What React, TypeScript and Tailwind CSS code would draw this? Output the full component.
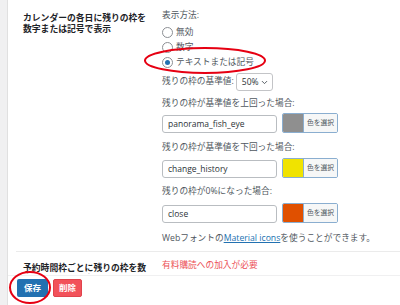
import { ChevronDown } from "lucide-react";

const font = "font-['Open_Sans','Noto_Sans_CJK_JP',sans-serif]";

function Radio({ label, checked }: { label: string; checked?: boolean }) {
    return (
        <div className="flex items-center gap-[3px] h-[15px] leading-[15px]">
            <span className="w-[11px] h-[11px] rounded-full border border-[#8c8f94] bg-white flex items-center justify-center">
                {checked && <span className="w-[5px] h-[5px] rounded-full bg-[#2271b1]" />}
            </span>
            <span>{label}</span>
        </div>
    );
}

function IconRow({ value, color, className }: { value: string; color: string; className?: string }) {
    return (
        <div className={`flex items-start gap-[5px] ${className ?? ""}`}>
            <div className="mt-[2px] w-[115px] h-[18px] border border-[#b9bdc1] rounded-[3px] bg-white pl-[5px] flex items-center text-[8.5px] text-[#2c3338]">
                {value}
            </div>
            <div className="w-[56px] h-[20px] border border-[#8aaed0] rounded-[2px] flex overflow-hidden">
                <span className="w-[20px] h-full" style={{ backgroundColor: color }} />
                <span className="flex-1 bg-[#f6f7f7] border-l border-[#8aaed0] flex items-center justify-center text-[6.8px] text-[#50575e]">
                    色を選択
                </span>
            </div>
        </div>
    );
}

export default function App() {
    return (
        <div className={`relative w-[400px] h-[305px] bg-[#f0f0f1] flex overflow-hidden ${font}`}>
            <div className="w-[7px] shrink-0" />
            <div className="flex-1 bg-white border-l border-[#e0e0e0] flex flex-col">
                <div className="flex-1 overflow-hidden pl-[8px]">
                    {/* row: 残りの枠を表示 */}
                    <div className="grid grid-cols-[146px_1fr] border-b border-[#ebebeb]">
                        <div className="pl-[7px] pr-[11px] pt-[13px] text-[8.8px] leading-[11px] font-bold text-[#1d2327]">
                            カレンダーの各日に残りの枠を<br />数字または記号で表示
                        </div>
                        <div className="pt-[8px] pb-[5px] text-[8.7px] text-[#50575e]">
                            <div className="h-[15px] leading-[15px]">表示方法:</div>
                            <div className="mt-[2px]">
                                <Radio label="無効" />
                                <Radio label="数字" />
                                <Radio label="テキストまたは記号" checked />
                            </div>
                            <div className="mt-[3px] flex items-center gap-[2px] h-[18px]">
                                <span>残りの枠の基準値:</span>
                                <div className="w-[37px] h-[18px] border border-[#c3c4c7] rounded-[3px] flex items-center justify-between pl-[5px] pr-[3px] text-[8.5px] text-[#2c3338]">
                                    <span>50%</span>
                                    <ChevronDown size={9} strokeWidth={2.5} className="text-[#50575e]" />
                                </div>
                            </div>
                            <div className="mt-[5px] h-[15px] leading-[15px]">残りの枠が基準値を上回った場合:</div>
                            <IconRow className="mt-[2px]" value="panorama_fish_eye" color="#8f8f8f" />
                            <div className="mt-[7px] h-[15px] leading-[15px]">残りの枠が基準値を下回った場合:</div>
                            <IconRow className="mt-[3px]" value="change_history" color="#f0e300" />
                            <div className="mt-[6px] h-[15px] leading-[15px]">残りの枠が0%になった場合:</div>
                            <IconRow className="mt-[4px]" value="close" color="#e05000" />
                            <div className="mt-[8px] h-[15px] leading-[15px]">
                                Webフォントの<span className="text-[#2271b1] underline">Material icons</span>を使うことができます。
                            </div>
                        </div>
                    </div>
                    {/* row: 予約時間枠ごと (second line runs under the footer) */}
                    <div className="grid grid-cols-[146px_1fr]">
                        <div className="pl-[7px] pr-[11px] pt-[11px] h-[22px] overflow-hidden text-[8.8px] leading-[11px] font-bold text-[#1d2327]">
                            予約時間枠ごとに残りの枠を数字または記号で表示
                        </div>
                        <div className="pt-[6px] text-[8.7px] leading-[15px] text-[#ec4f55]">
                            有料購読への加入が必要
                        </div>
                    </div>
                </div>
                <div className="h-[30px] shrink-0 border-t border-[#f0f0f1] bg-white pl-[9px] pt-[3px] flex items-start gap-[5px]">
                    <button className="w-[31px] h-[18px] rounded-[2px] bg-[#2271b1] text-white text-[8.5px] font-bold flex items-center justify-center">
                        保存
                    </button>
                    <button className="w-[29px] h-[18px] rounded-[2px] bg-[#f2525a] border border-[#e0434c] text-white text-[8.5px] font-bold flex items-center justify-center">
                        削除
                    </button>
                </div>
            </div>
            {/* annotation marks */}
            <svg className="absolute inset-0 pointer-events-none" width="400" height="305">
                <ellipse cx="205" cy="60.5" rx="60" ry="12.5" fill="none" stroke="#e60012" strokeWidth="2" />
                <ellipse cx="30" cy="287.5" rx="20" ry="15.5" fill="none" stroke="#e60012" strokeWidth="2" />
            </svg>
        </div>
    );
}
